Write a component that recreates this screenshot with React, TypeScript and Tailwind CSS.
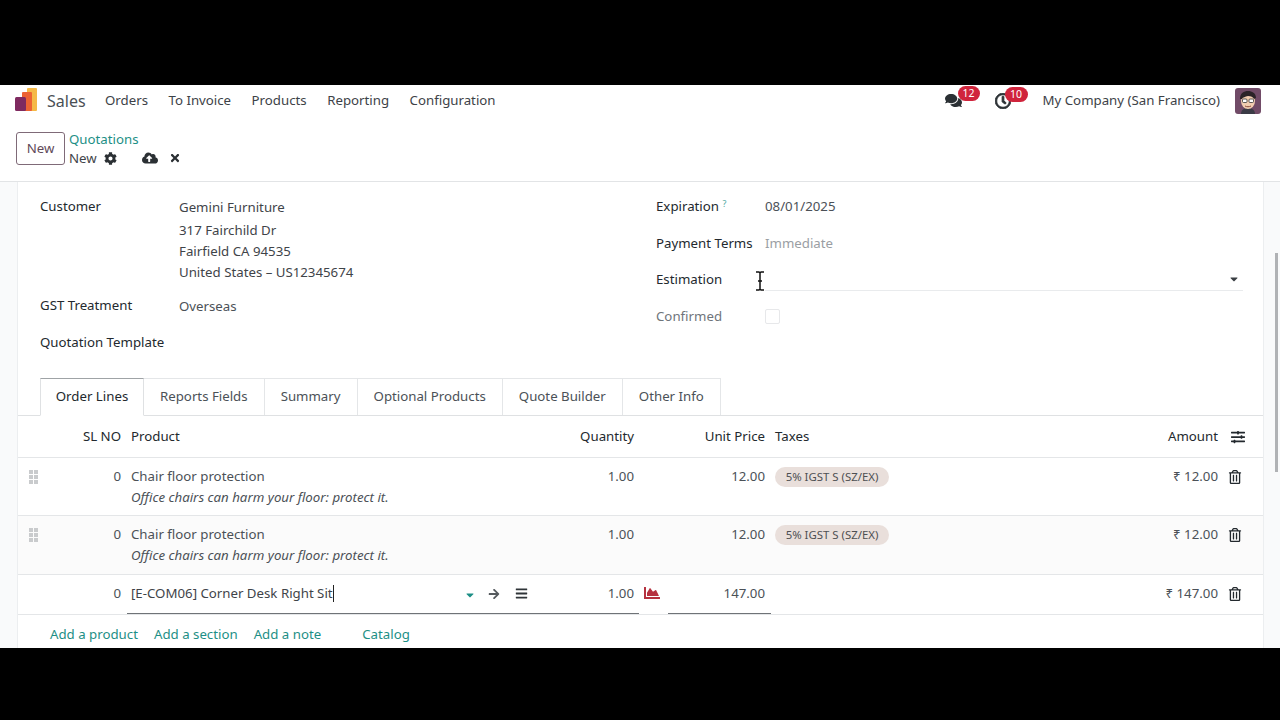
import React from "react";
import { FaRegTrashAlt, FaComments, FaRegClock, FaCog, FaCloudUploadAlt, FaTimes, FaArrowRight, FaBars, FaSlidersH, FaCaretDown, FaChartArea } from "react-icons/fa";

function Logo() {
  return (
    <svg width="22" height="23" viewBox="0 0 22 23">
      <rect x="12" y="0" width="10" height="23" rx="1" fill="#f5b947" />
      <rect x="7" y="4" width="10" height="19" rx="1" fill="#ec6233" />
      <rect x="0" y="9" width="11" height="14" rx="1.5" fill="#7f2a60" />
    </svg>
  );
}

function Avatar() {
  return (
    <svg width="26" height="26" viewBox="0 0 26 26">
      <rect width="26" height="26" rx="3" fill="#714b67" />
      <path d="M6 26c0-4 3-6 7-6s7 2 7 6z" fill="#3b3b46" />
      <ellipse cx="13" cy="13" rx="7" ry="8" fill="#f2cdb0" />
      <path d="M5 11c0-6 4-8 8-8s8 2 8 7l-2 1c-1-2-3-3-6-3-3 1-5 1-6 3z" fill="#2b2328" />
      <rect x="7.5" y="11" width="4.5" height="3.5" rx="1" fill="#fff" stroke="#333" strokeWidth="0.8" />
      <rect x="14" y="11" width="4.5" height="3.5" rx="1" fill="#fff" stroke="#333" strokeWidth="0.8" />
      <path d="M10 18c2 1 4 1 6 0" stroke="#8a4b3a" strokeWidth="1" fill="none" />
    </svg>
  );
}

function Grip() {
  return (
    <div className="grid grid-cols-2 gap-[1px] w-[9px]">
      {[0, 1, 2, 3, 4, 5].map((i) => (
        <span key={i} className="block w-[4px] h-[4px] bg-[#c9cbcd]" />
      ))}
    </div>
  );
}

function Field({ label, children, muted }: { label: React.ReactNode; children?: React.ReactNode; muted?: boolean }) {
  return (
    <div className="flex h-[36.5px] items-start">
      <div className={`w-[109px] shrink-0 pt-[5px] ${muted ? "text-[#6f757b]" : "text-[#23292e]"}`}>{label}</div>
      <div className="flex-1 pt-[5px]">{children}</div>
    </div>
  );
}

function OrderRow({ bg, h }: { bg?: string; h: string }) {
  return (
    <div className={`flex ${h} border-b border-[#e4e6e8] ${bg ?? ""}`}>
      <div className="w-[30px] pl-[11px] pt-[12px] shrink-0"><Grip /></div>
      <div className="w-[73px] text-right pt-[8px] shrink-0 leading-[21px]">0</div>
      <div className="w-[410px] pl-[10px] pt-[8px] shrink-0">
        <div className="leading-[21px]">Chair floor protection</div>
        <div className="italic leading-[21px]">Office chairs can harm your floor: protect it.</div>
      </div>
      <div className="w-[103px] text-right pt-[8px] shrink-0 leading-[21px]">1.00</div>
      <div className="w-[131px] text-right pt-[8px] shrink-0 leading-[21px]">12.00</div>
      <div className="pl-[10px] pt-[9px] w-[395px] shrink-0">
        <span className="inline-flex h-[20px] w-[114px] justify-center items-center rounded-full bg-[#e9dfdb] text-[11.4px] text-[#4d4f52]">5% IGST S (SZ/EX)</span>
      </div>
      <div className="w-[58px] text-right pt-[8px] shrink-0 leading-[21px]">₹ 12.00</div>
      <div className="pl-[10px] pt-[12px] text-[#23292e] text-[14px]"><FaRegTrashAlt /></div>
    </div>
  );
}

export default function App() {
  const tabs = ["Order Lines", "Reports Fields", "Summary", "Optional Products", "Quote Builder", "Other Info"];
  return (
    <div className="h-[720px] w-[1280px] bg-black flex flex-col overflow-hidden text-[13.25px] text-[#4b5157] font-['Noto_Sans','Open_Sans',sans-serif]">
      <div className="h-[85px] shrink-0" />
      <div className="h-[563px] shrink-0 bg-white flex flex-col overflow-hidden relative">
        {/* navbar */}
        <div className="h-[31px] shrink-0 flex items-center text-[#3d4247]">
          <div className="ml-[15px] w-[22px] -mt-[3px]"><Logo /></div>
          <div className="ml-[10px] text-[16px] text-[#4a4f54] w-[58px]">Sales</div>
          <div className="flex gap-[20.5px]">
            <span>Orders</span>
            <span>To Invoice</span>
            <span>Products</span>
            <span>Reporting</span>
            <span>Configuration</span>
          </div>
          <div className="ml-auto flex items-center">
            <div className="relative w-[18px] text-[17px] text-[#2b3034]">
              <FaComments />
              <span className="absolute left-[13px] -top-[6px] h-[15px] w-[22px] rounded-full bg-[#d0243c] text-white text-[10.5px] leading-[15px] text-center">12</span>
            </div>
            <div className="relative w-[18px] ml-[32px] text-[16px] text-[#2b3034]">
              <FaRegClock strokeWidth={30} />
              <span className="absolute left-[10px] -top-[6px] h-[15px] w-[23px] rounded-full bg-[#d0243c] text-white text-[10.5px] leading-[15px] text-center">10</span>
            </div>
            <div className="ml-[30px]">My Company (San Francisco)</div>
            <div className="ml-[15px] mr-[19px]"><Avatar /></div>
          </div>
        </div>
        {/* control panel */}
        <div className="h-[66px] shrink-0 border-b border-[#e2e4e6] flex pl-[16px] pt-[16px]">
          <div className="h-[33px] w-[49px] rounded-[3px] border border-[#7f6a78] flex items-center justify-center text-[#5f4a59]">New</div>
          <div className="ml-[4px] -mt-[2px]">
            <div className="text-[#1d8f86] leading-[19px]">Quotations</div>
            <div className="flex items-center leading-[18px] text-[#3f4449]">
              <span>New</span>
              <FaCog className="ml-[7px] text-[13px] text-[#2b3034]" />
              <FaCloudUploadAlt className="ml-[25px] text-[16px] text-[#2b3034]" />
              <FaTimes className="ml-[11px] text-[12px] text-[#2b3034]" />
            </div>
          </div>
        </div>
        {/* body */}
        <div className="flex-1 flex bg-[#f9fafb] overflow-hidden">
          <div className="w-[1247px] ml-[17px] bg-white border-x border-[#eceef0] shrink-0 overflow-hidden">
            <div className="flex pt-[9px] h-[185px] pl-[22px]">
              <div className="w-[616px] shrink-0">
                <div className="flex h-[90px]">
                  <div className="w-[139px] text-[#23292e] pt-[5px] leading-[21px]">Customer</div>
                  <div className="pt-[6px] leading-[21px] text-[#3f4449]">
                    <div className="h-[22.5px]">Gemini Furniture</div>
                    <div className="h-[21.5px]">317 Fairchild Dr</div>
                    <div className="h-[20.5px]">Fairfield CA 94535</div>
                    <div>United States – US12345674</div>
                  </div>
                </div>
                <div className="flex h-[36px] pt-[15px] items-start mt-[9px]">
                  <div className="w-[139px] text-[#23292e] -mt-[10px] leading-[21px]">GST Treatment</div>
                  <div className="-mt-[9px] leading-[21px]">Overseas</div>
                </div>
                <div className="text-[#23292e] leading-[21px] mt-[6px]">Quotation Template</div>
              </div>
              <div className="w-[587px] shrink-0 leading-[21px]">
                <Field label={<span>Expiration <sup className="text-[#4fa9a2] text-[9px]">?</sup></span>}>08/01/2025</Field>
                <Field label="Payment Terms"><span className="text-[#9a9ea3]">Immediate</span></Field>
                <Field label="Estimation">
                  <div className="h-[27px] -mt-[5px] border-b border-[#e9ebed] flex items-center justify-end">
                    <FaCaretDown className="text-[12px] text-[#3a3f44] mt-[3px] mr-[3px]" />
                  </div>
                </Field>
                <Field label="Confirmed" muted>
                  <div className="w-[15px] h-[15px] mt-[3px] border border-[#e7e8ea] rounded-[2px]" />
                </Field>
              </div>
            </div>
            {/* tabs */}
            <div className="flex h-[38px] pl-[22px] border-b border-[#dfe1e3] mt-[11px]">
              {tabs.map((t, i) => (
                <div
                  key={t}
                  className={
                    i === 0
                      ? "h-[38px] w-[104px] flex items-center justify-center text-[#23292e] border border-[#dfe1e3] border-t-[#9fa3a6] border-b-white bg-white"
                      : "h-[37px] px-[16px] flex items-center justify-center border-t border-r border-[#e4e6e8] text-[#4b5157]"
                  }
                >
                  {t}
                </div>
              ))}
            </div>
            {/* table */}
            <div className="flex h-[42px] items-center border-b border-[#e4e6e8] text-[#23292e]">
              <div className="w-[103px] text-right shrink-0">SL NO</div>
              <div className="w-[410px] pl-[10px] shrink-0">Product</div>
              <div className="w-[103px] text-right shrink-0">Quantity</div>
              <div className="w-[131px] text-right shrink-0">Unit Price</div>
              <div className="pl-[10px] w-[395px] shrink-0">Taxes</div>
              <div className="w-[58px] text-right shrink-0 whitespace-nowrap">Amount</div>
              <FaSlidersH className="ml-[13px] text-[14px]" />
            </div>
            <OrderRow h="h-[58px]" />
            <OrderRow h="h-[59px]" bg="bg-[#fbfbfb]" />
            <div className="flex h-[40px] border-b border-[#e4e6e8] leading-[21px]">
              <div className="w-[103px] text-right pt-[8px] shrink-0">0</div>
              <div className="w-[410px] shrink-0 relative">
                <div className="absolute left-[6px] w-[512px] top-0 h-[39px] border-b border-[#6f7377] pt-[8px] pl-[4px] flex">
                  <span className="text-[#3f4449]">[E-COM06] Corner Desk Right Sit</span>
                  <span className="w-px h-[17px] bg-[#222] mt-[2px]" />
                  <div className="absolute left-[337px] top-[14px] text-[12px] text-[#1d8f86]"><FaCaretDown /></div>
                  <div className="absolute left-[361px] top-[13px] text-[12px] text-[#555a5e]"><FaArrowRight /></div>
                  <div className="absolute left-[388px] top-[12px] text-[13px] text-[#2f3438]"><FaBars /></div>
                </div>
              </div>
              <div className="w-[103px] text-right pt-[8px] shrink-0 relative">1.00</div>
              <div className="w-[131px] shrink-0 relative">
                <div className="absolute left-[10px] top-[10px] text-[16px] text-[#b5313f]"><FaChartArea /></div>
                <div className="absolute left-[34px] right-[-6px] top-0 h-[39px] border-b border-[#6f7377] pt-[8px] pr-[6px] text-right">147.00</div>
              </div>
              <div className="w-[395px] shrink-0" />
              <div className="w-[58px] text-right pt-[8px] shrink-0 whitespace-nowrap">₹ 147.00</div>
              <div className="pl-[10px] pt-[12px] text-[#23292e] text-[14px]"><FaRegTrashAlt /></div>
            </div>
            <div className="flex gap-[16px] pl-[32px] pt-[10px] text-[#1d8f86]">
              <span>Add a product</span>
              <span>Add a section</span>
              <span>Add a note</span>
              <span className="ml-[25px]">Catalog</span>
            </div>
          </div>
        </div>
        {/* scrollbar thumb */}
        <div className="absolute right-[2px] top-[168px] h-[219px] w-[3px] bg-[#b0b2b5]" />
        {/* mouse cursor */}
        <svg className="absolute left-[754px] top-[186px]" width="12" height="20" viewBox="0 0 12 20">
          <path d="M2 1h3l1 1 1-1h3M6 2v16M2 19h3l1-1 1 1h3M4 10h4" stroke="#111" strokeWidth="1.5" fill="none" />
        </svg>
      </div>
      <div className="flex-1" />
    </div>
  );
}
